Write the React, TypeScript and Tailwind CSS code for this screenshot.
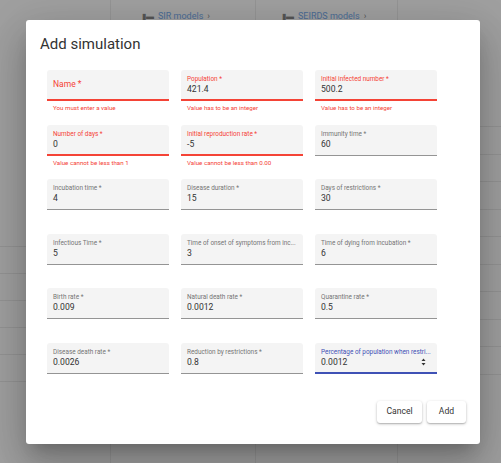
import React from 'react';

type Field = {
  label: string;
  value?: string;
  error?: string;
  invalid?: boolean;
  focused?: boolean;
};

const rows: Field[][] = [
  [
    { label: 'Name *', invalid: true, error: 'You must enter a value' },
    { label: 'Population *', value: '421.4', invalid: true, error: 'Value has to be an integer' },
    { label: 'Initial infected number *', value: '500.2', invalid: true, error: 'Value has to be an integer' },
  ],
  [
    { label: 'Number of days *', value: '0', invalid: true, error: 'Value cannot be less than 1' },
    { label: 'Initial reproduction rate *', value: '-5', invalid: true, error: 'Value cannot be less than 0.00' },
    { label: 'Immunity time *', value: '60' },
  ],
  [
    { label: 'Incubation time *', value: '4' },
    { label: 'Disease duration *', value: '15' },
    { label: 'Days of restrictions *', value: '30' },
  ],
  [
    { label: 'Infectious Time *', value: '5' },
    { label: 'Time of onset of symptoms from inc...', value: '3' },
    { label: 'Time of dying from incubation *', value: '6' },
  ],
  [
    { label: 'Birth rate *', value: '0.009' },
    { label: 'Natural death rate *', value: '0.0012' },
    { label: 'Quarantine rate *', value: '0.5' },
  ],
  [
    { label: 'Disease death rate *', value: '0.0026' },
    { label: 'Reduction by restrictions *', value: '0.8' },
    { label: 'Percentage of population when restri...', value: '0.0012', focused: true },
  ],
];

const Spinner = () => (
  <svg width="5" height="8" viewBox="0 0 5 8" className="shrink-0">
    <path d="M2.5 0.5 L4.5 3 L0.5 3 Z" fill="#333" />
    <path d="M2.5 7.5 L4.5 5 L0.5 5 Z" fill="#333" />
  </svg>
);

const TextField: React.FC<{ f: Field }> = ({ f }) => {
  const border = f.invalid
    ? 'border-b-2 border-[#f44336]'
    : f.focused
    ? 'border-b-2 border-[#3f51b5]'
    : 'border-b border-[#949494]';
  const labelColor = f.invalid ? 'text-[#f44336]' : f.focused ? 'text-[#3f51b5]' : 'text-[#757575]';

  return (
    <div className="flex flex-col">
      {f.value === undefined ? (
        <div className={`h-[31px] bg-[#f4f4f4] rounded-t-[3px] px-[6px] flex items-center ${border}`}>
          <span className="text-[8.5px] text-[#f44336]">{f.label}</span>
        </div>
      ) : (
        <div className={`h-[31px] bg-[#f4f4f4] rounded-t-[3px] px-[6px] pt-[5px] ${border}`}>
          <div className={`text-[6.4px] leading-[8px] whitespace-nowrap ${labelColor}`}>{f.label}</div>
          <div className="flex items-center justify-between pr-[5px]">
            <span className="text-[8.6px] leading-[12px] text-[#333]">{f.value}</span>
            {f.focused && <Spinner />}
          </div>
        </div>
      )}
      {f.error && (
        <div className="mt-[3px] px-[6px] text-[6.2px] leading-[8px] text-[#f44336] whitespace-nowrap">{f.error}</div>
      )}
    </div>
  );
};

const Background = () => (
  <div className="h-full w-full bg-[#a0a0a0] flex">
    <div className="w-[110px] flex flex-col">
      <div className="h-[246px]" />
      {Array.from({ length: 6 }).map((_, i) => (
        <div key={i} className="h-[27px] border-t border-[#949494]" />
      ))}
    </div>
    <div className="w-[145px] border-l border-[#959595] flex flex-col">
      <div className="h-[24px] flex items-end gap-[4px] pl-[31px] pb-[1px]">
        <span className="text-[8px] text-[#555]">▮▬</span>
        <span className="text-[9px] text-[#4b6c96] underline">SIR models</span>
        <span className="text-[9px] text-[#555]">›</span>
      </div>
    </div>
    <div className="w-[142px] border-l border-[#959595] flex flex-col">
      <div className="h-[24px] flex items-end gap-[4px] pl-[26px] pb-[1px]">
        <span className="text-[8px] text-[#555]">▮▬</span>
        <span className="text-[9px] text-[#4b6c96] underline">SEIRDS models</span>
        <span className="text-[9px] text-[#555]">›</span>
      </div>
    </div>
    <div className="flex-1 border-l border-[#959595] flex flex-col">
      <div className="h-[126px]" />
      {Array.from({ length: 10 }).map((_, i) => (
        <div key={i} className="h-[27.5px] border-t border-[#949494]" />
      ))}
    </div>
  </div>
);

export default function App() {
  return (
    <div
      className="relative w-[501px] h-[463px] overflow-hidden"
      style={{ fontFamily: 'Roboto, "Liberation Sans", sans-serif' }}
    >
      <Background />

      <div className="absolute left-[26px] top-[20px] w-[454px] h-[424px] bg-white rounded-[3px] shadow-[0_11px_15px_-7px_rgba(0,0,0,0.2),0_24px_38px_3px_rgba(0,0,0,0.14),0_9px_46px_8px_rgba(0,0,0,0.12)] flex flex-col">
        <h2 className="pl-[14px] pt-[14px] text-[15px] leading-[20px] text-[#333]">Add simulation</h2>

        <div className="mt-[16px] pl-[21px] flex flex-col">
          {rows.map((row, i) => (
            <div key={i} className="h-[54.6px] grid grid-cols-[122px_122px_122px] gap-x-[12px] items-start">
              {row.map((f) => (
                <TextField key={f.label} f={f} />
              ))}
            </div>
          ))}
        </div>

        <div className="flex justify-end gap-[5px] pr-[14px] mt-[3px]">
          <button className="h-[22px] w-[45px] bg-white rounded-[3px] text-[8.6px] text-[#333] shadow-[0_1px_3px_rgba(0,0,0,0.25),0_1px_1px_rgba(0,0,0,0.12)]">
            Cancel
          </button>
          <button className="h-[22px] w-[39px] bg-white rounded-[3px] text-[8.6px] text-[#333] shadow-[0_1px_3px_rgba(0,0,0,0.25),0_1px_1px_rgba(0,0,0,0.12)]">
            Add
          </button>
        </div>
      </div>
    </div>
  );
}
